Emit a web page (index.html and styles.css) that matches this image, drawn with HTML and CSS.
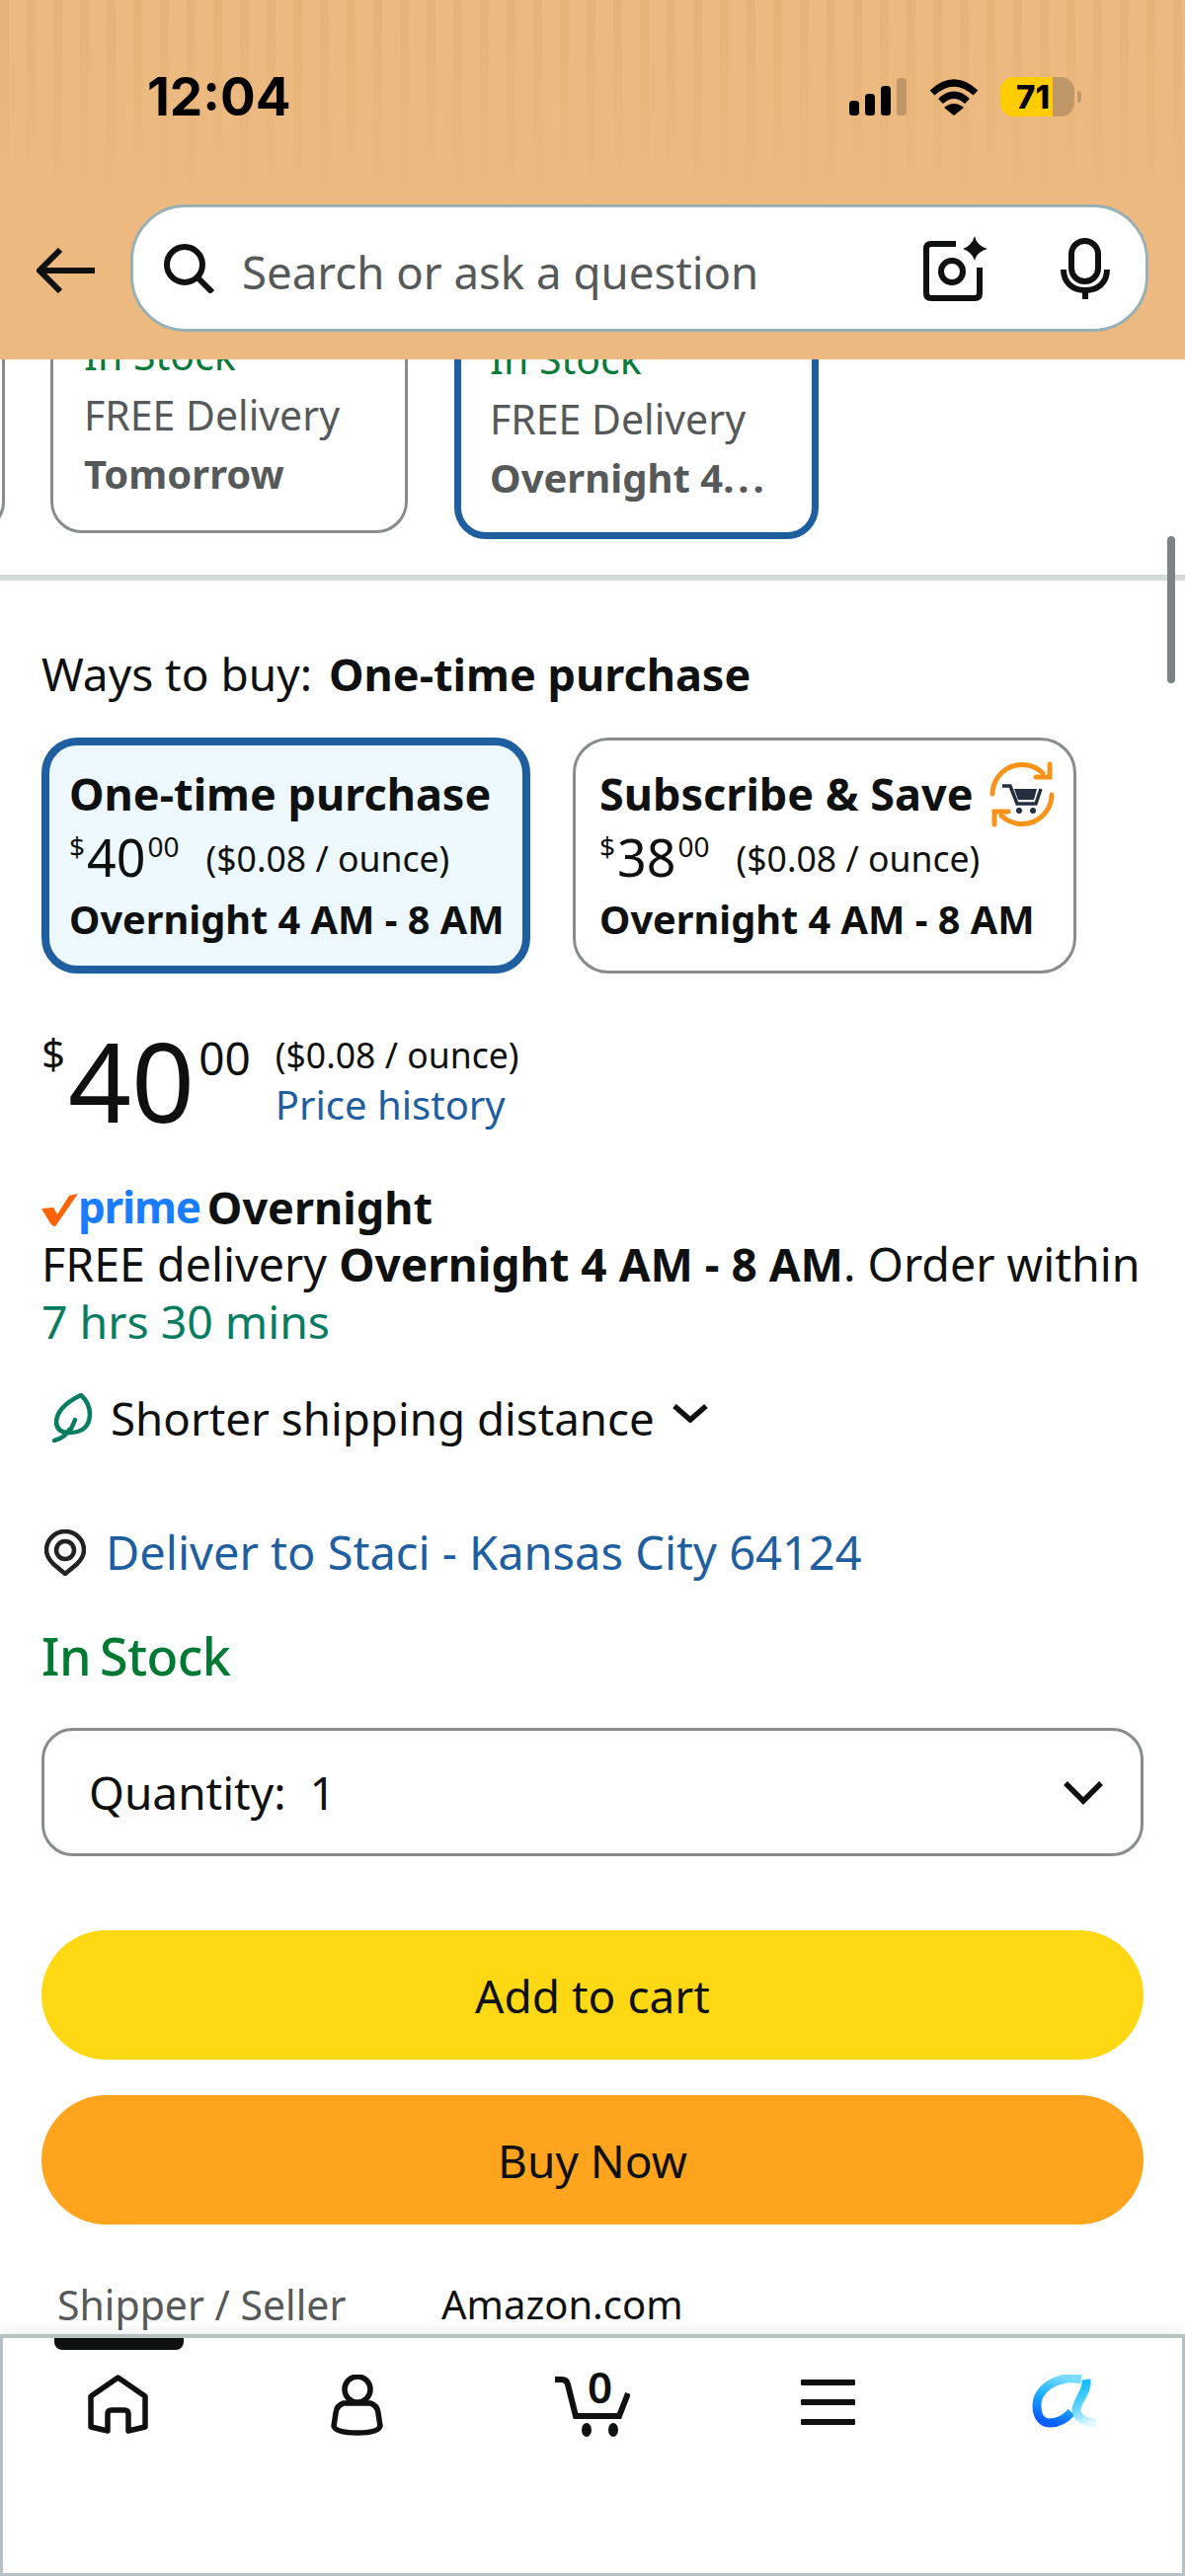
FILE: index.html
```html
<!DOCTYPE html>
<html lang="en">
<head>
    <meta charset="UTF-8">
    <meta name="viewport" content="width=device-width, initial-scale=1.0">
    <title>Product offer</title>
    <link rel="stylesheet" href="styles.css">
</head>
<body>
<div class="page">
    <header class="top-bar">
        <div class="status-bar">
            <span class="clock">12:04</span>
            <div class="status-icons">
                <svg class="signal" width="58" height="38" viewBox="0 0 58 38">
                    <rect x="0" y="23" width="10" height="15" rx="3.5" fill="#000"/>
                    <rect x="16" y="16" width="10" height="22" rx="3.5" fill="#000"/>
                    <rect x="32" y="8" width="10" height="30" rx="3.5" fill="#000"/>
                    <rect x="48" y="0" width="10" height="38" rx="3.5" fill="#c09768"/>
                </svg>
                <svg class="wifi" width="50" height="38" viewBox="0 0 50 38">
                    <path d="M3 15 Q25 -5 47 15" fill="none" stroke="#000" stroke-width="7"/>
                    <path d="M11.5 23.5 Q25 11 38.500 23.500" fill="none" stroke="#000" stroke-width="7"/>
                    <path d="M15 30 Q25 22 35 30 L25 38 Z" fill="#000"/>
                </svg>
                <div class="battery"><span>71</span></div>
            </div>
        </div>
        <div class="search-row">
            <svg class="back-arrow" width="59" height="46" viewBox="0 0 59 46">
                <path d="M59 23 H4 M24 2 L3 23 L24 44" fill="none" stroke="#0f1111" stroke-width="6"/>
            </svg>
            <div class="search-box">
                <svg class="search-icon" width="53" height="50" viewBox="0 0 53 50">
                    <circle cx="22" cy="21" r="18" fill="none" stroke="#0f1111" stroke-width="6"/>
                    <path d="M35 34 L50 49" stroke="#0f1111" stroke-width="6"/>
                </svg>
                <span class="search-text">Search or ask a question</span>
                <svg class="camera-icon" width="65" height="66" viewBox="0 0 65 66">
                    <path d="M33 8 H8 Q3 8 3 13 V58 Q3 63 8 63 H52 Q57 63 57 58 V32" fill="none" stroke="#0f1111" stroke-width="6"/>
                    <circle cx="29" cy="36" r="11" fill="none" stroke="#0f1111" stroke-width="6"/>
                    <path d="M52 0 Q54 10 65 13 Q54 16 52 25 Q49 16 40 13 Q49 10 52 0 Z" fill="#0f1111"/>
                </svg>
                <svg class="mic-icon" width="50" height="62" viewBox="0 0 50 62">
                    <rect x="11" y="3" width="27" height="41" rx="13.500" fill="none" stroke="#0f1111" stroke-width="6"/>
                    <path d="M3 32 C3 46 13 53 25 53 C37 53 47 46 47 32 M25 53 V62" fill="none" stroke="#0f1111" stroke-width="6"/>
                </svg>
            </div>
        </div>
    </header>

    <main class="content">
        <section class="offer-strip">
            <div class="strip-card strip-card-edge"></div>
            <div class="strip-card">
                <div class="strip-stock">In Stock</div>
                <div class="strip-line">FREE Delivery</div>
                <div class="strip-line strip-bold">Tomorrow</div>
            </div>
            <div class="strip-card strip-card-selected">
                <div class="strip-stock">In Stock</div>
                <div class="strip-line">FREE Delivery</div>
                <div class="strip-line strip-bold">Overnight 4<span class="strip-dots">...</span></div>
            </div>
        </section>

        <div class="scroll-thumb"></div>

        <section class="buy-panel">
            <h2 class="ways-title">Ways to buy: <b>One-time purchase</b></h2>

            <div class="ways-row">
                <div class="way-card way-card-selected">
                    <div class="way-name">One-time purchase</div>
                    <div class="way-price"><sup>$</sup><span class="way-whole">40</span><sup>00</sup><span class="way-unit">($0.08 / ounce)</span></div>
                    <div class="way-date">Overnight 4 AM - 8 AM</div>
                </div>
                <div class="way-card">
                    <div class="way-name">Subscribe &amp; Save</div>
                    <svg class="sns-icon" width="66" height="67" viewBox="0 0 66 67">
                        <path d="M3 33 A30 30 0 0 1 54 12 M63 34 A30 30 0 0 1 12 55" fill="none" stroke="#f7931a" stroke-width="5" stroke-linecap="round"/>
                        <path d="M61 3 V16 H47 M5 64 V51 H19" fill="none" stroke="#f7931a" stroke-width="5" stroke-linecap="round"/>
                        <path d="M13 25 H21 L28 43 H47 L52 28" fill="none" stroke="#232f3e" stroke-width="3.500"/>
                        <path d="M25 28 H48 L45 39 H29 Z" fill="#232f3e"/>
                        <circle cx="30" cy="50" r="3" fill="#232f3e"/>
                        <circle cx="44" cy="50" r="3" fill="#232f3e"/>
                    </svg>
                    <div class="way-price"><sup>$</sup><span class="way-whole">38</span><sup>00</sup><span class="way-unit">($0.08 / ounce)</span></div>
                    <div class="way-date">Overnight 4 AM - 8 AM</div>
                </div>
            </div>

            <div class="price-block">
                <div class="price-main"><sup class="price-sign">$</sup><span class="price-whole">40</span><sup class="price-cents">00</sup></div>
                <div class="price-side">
                    <div class="price-unit">($0.08 / ounce)</div>
                    <a class="link price-history">Price history</a>
                </div>
            </div>

            <div class="prime-row">
                <svg class="prime-check" width="37" height="34" viewBox="0 0 37 34">
                    <path d="M0 15 L12 14 L16 21 L28 2 L37 0 L14 33 Q12 34 9 30 Z" fill="#ff6200"/>
                </svg>
                <span class="prime-word">prime</span>
                <b class="prime-label">Overnight</b>
            </div>
            <p class="delivery-line">FREE delivery <b>Overnight 4 AM - 8 AM</b>. Order within</p>
            <p class="delivery-line countdown">7 hrs 30 mins</p>

            <div class="shipping-row">
                <svg class="leaf-icon" width="42" height="50" viewBox="0 0 42 50">
                    <path d="M3 48 Q14 45 18 37 M30 2 Q5 14 5 30 Q6 40 18 40 Q38 40 39 22 Q39 10 30 2 Z M18 40 Q22 32 24 27" fill="none" stroke="#067d62" stroke-width="4.500" stroke-linecap="round" stroke-linejoin="round"/>
                </svg>
                <span>Shorter shipping distance</span>
                <svg class="small-chevron" width="38" height="20" viewBox="0 0 38 20">
                    <path d="M3 3 L19 17 L35 3" fill="none" stroke="#0f1111" stroke-width="5.500"/>
                </svg>
            </div>

            <div class="deliver-row">
                <svg class="pin-icon" width="42" height="47" viewBox="0 0 42 47">
                    <path d="M21 45 L9 35 Q2 28 2 21 A19 19 0 0 1 40 21 Q40 28 33 35 Z" fill="none" stroke="#222" stroke-width="4.500"/>
                    <circle cx="21" cy="21" r="9" fill="none" stroke="#222" stroke-width="4.500"/>
                </svg>
                <a class="link">Deliver to Staci - Kansas City 64124</a>
            </div>

            <div class="stock-label">In Stock</div>

            <div class="quantity-select">
                <span>Quantity:&nbsp; 1</span>
                <svg width="42" height="25" viewBox="0 0 42 25">
                    <path d="M3 3 L21 21 L39 3" fill="none" stroke="#0f1111" stroke-width="5.500"/>
                </svg>
            </div>

            <button class="buy-button add-button">Add to cart</button>
            <button class="buy-button now-button">Buy Now</button>

            <div class="seller-row">
                <span class="seller-key">Shipper / Seller</span>
                <span class="seller-value">Amazon.com</span>
            </div>
        </section>
    </main>

    <nav class="bottom-nav">
        <div class="nav-item nav-item-active">
            <svg width="61" height="60" viewBox="0 0 61 60">
                <path d="M30.500 3 L58 22 V53 L41 57 V40 Q41 36 37 36 H24 Q20 36 20 40 V57 L3 53 V22 Z" fill="none" stroke="#0f1111" stroke-width="5.500" stroke-linejoin="round"/>
            </svg>
        </div>
        <div class="nav-item">
            <svg width="53" height="62" viewBox="0 0 53 62">
                <ellipse cx="27" cy="15" rx="13" ry="13" fill="none" stroke="#0f1111" stroke-width="5.500"/>
                <path d="M13 29 H40 Q47 31 48 39 L50 52 Q48 59 27 59 Q5 59 3 52 L5 39 Q6 31 13 29 Z" fill="none" stroke="#0f1111" stroke-width="5.500"/>
            </svg>
        </div>
        <div class="nav-item">
            <div class="cart-icon">
                <svg width="76" height="67" viewBox="0 0 76 67">
                    <path d="M0 9 H7 Q12 9 13 14 L21 46 H65 L74 23" fill="none" stroke="#0f1111" stroke-width="6"/>
                    <ellipse cx="32" cy="60" rx="5" ry="7" fill="#0f1111"/>
                    <ellipse cx="59" cy="60" rx="5" ry="7" fill="#0f1111"/>
                </svg>
                <span class="cart-count">0</span>
            </div>
        </div>
        <div class="nav-item">
            <div class="menu-icon"><i></i><i></i><i></i></div>
        </div>
        <div class="nav-item">
            <svg width="65" height="54" viewBox="0 0 65 54">
                <defs>
                    <linearGradient id="logo-ring" x1="0.700" y1="0" x2="0.300" y2="1">
                        <stop offset="0" stop-color="#7adcff"/>
                        <stop offset="0.500" stop-color="#1fb2ff"/>
                        <stop offset="1" stop-color="#0a5cff"/>
                    </linearGradient>
                    <linearGradient id="logo-tail" x1="0.500" y1="0" x2="0.700" y2="1">
                        <stop offset="0" stop-color="#08bcff"/>
                        <stop offset="0.600" stop-color="#6fd8ff"/>
                        <stop offset="1" stop-color="#e4f8ff"/>
                    </linearGradient>
                </defs>
                <path d="M50 5 C40 3 32 4 27 6 C14 10 5 20 5 31 C5 42 10 49 18 49 C26 49 34 45 40 38" fill="none" stroke="url(#logo-ring)" stroke-width="9"/>
                <path d="M55 5 C57 16 46 26 45 35 C45 44 54 49 65 49" fill="none" stroke="url(#logo-tail)" stroke-width="9"/>
            </svg>
        </div>
    </nav>
</div>
</body>
</html>
```

FILE: styles.css
```css
* {
    box-sizing: border-box;
}

body {
    margin: 0;
    font-family: "Noto Sans", sans-serif;
    color: #0f1111;
    background-color: #fff;
}

p, h2 {
    margin: 0;
    font-weight: 400;
}

.page {
    width: 1200px;
    height: 2609px;
    display: flex;
    flex-direction: column;
    overflow: hidden;
}

/* header */
.top-bar {
    height: 364px;
    flex-shrink: 0;
    padding-top: 78px;
    background-color: #ecba80;
    background-image:
        linear-gradient(to bottom, rgba(236, 186, 128, 0) 0, #ecba80 210px),
        repeating-linear-gradient(to right, #e5b277 0, #e5b277 9px, #ecba80 9px, #ecba80 27px);
}

.status-bar {
    display: flex;
    justify-content: space-between;
    align-items: center;
    height: 40px;
    padding: 0 112px 0 149px;
}

.clock {
    font-family: Inter, sans-serif;
    font-size: 53px;
    font-weight: 700;
    line-height: 40px;
    color: #000;
}

.status-icons {
    display: flex;
    align-items: center;
}

.wifi {
    margin-left: 23px;
}

.battery {
    position: relative;
    width: 75px;
    height: 40px;
    margin-left: 22px;
    border-radius: 14px;
    background: linear-gradient(to right, #ffcc00 71%, #c09769 71%);
    font-family: Inter, sans-serif;
    font-size: 33px;
    font-weight: 800;
    line-height: 40px;
    color: #000;
}

.battery span {
    display: block;
    padding-left: 16px;
}

.battery::after {
    content: "";
    position: absolute;
    right: -7px;
    top: 14px;
    width: 4px;
    height: 12px;
    border-radius: 0 6px 6px 0;
    background-color: #c09769;
}

.search-row {
    display: flex;
    align-items: center;
    margin-top: 89px;
    padding-left: 37px;
}

.back-arrow {
    margin-top: 5px;
}

.search-box {
    display: flex;
    align-items: center;
    width: 1031px;
    height: 129px;
    margin-left: 36px;
    padding: 0 36px 0 30px;
    background-color: #fff;
    border: 3px solid #97afb5;
    border-radius: 56px;
}

.search-text {
    flex: 1;
    margin-left: 27px;
    margin-top: 6px;
    font-size: 45.6px;
    line-height: 60px;
    color: #565959;
}

.mic-icon {
    margin-left: 74px;
}

/* offer strip under the header */
.content {
    position: relative;
    flex: 1;
    min-height: 0;
    overflow: hidden;
}

.offer-strip {
    display: flex;
    align-items: flex-end;
    height: 224px;
    overflow: hidden;
    border-bottom: 6px solid #d5d9d9;
    padding-bottom: 36px;
}

.strip-card {
    flex-shrink: 0;
    width: 362px;
    height: 300px;
    margin-left: 46px;
    margin-bottom: 6px;
    padding: 0 30px 27px 31px;
    border: 3px solid #888c8c;
    border-radius: 32px;
    display: flex;
    flex-direction: column;
    justify-content: flex-end;
    color: #565959;
}

.strip-card-edge {
    width: 100px;
    margin-left: -95px;
    padding: 0;
}

.strip-card-selected {
    width: 369px;
    margin-bottom: 0;
    border: 7px solid #1f5f9f;
    margin-left: 47px;
    padding: 0 29px 25px;
}

.strip-stock {
    margin-bottom: 3px;
    font-size: 41px;
    line-height: 56px;
    color: #0a7a3b;
}

.strip-line {
    font-size: 41px;
    line-height: 60px;
}

.strip-bold {
    font-size: 40px;
    font-weight: 700;
}

.strip-dots {
    letter-spacing: 4px;
}

.scroll-thumb {
    position: absolute;
    top: 179px;
    right: 10px;
    width: 8px;
    height: 149px;
    border-radius: 4px;
    background-color: #7d8285;
}

/* ways to buy */
.buy-panel {
    padding: 0 42px;
}

.ways-title {
    margin-top: 64px;
    font-size: 46px;
    line-height: 60px;
}

.ways-title b {
    margin-left: 5px;
    font-size: 45px;
}

.ways-row {
    display: flex;
    gap: 43px;
    margin-top: 34px;
}

.way-card {
    position: relative;
    width: 510px;
    height: 239px;
    padding: 24px 24px 0;
    border: 3px solid #888c8c;
    border-radius: 36px;
    background-color: #fff;
    white-space: nowrap;
}

.way-card-selected {
    width: 495px;
    padding: 19px 20px 0;
    border: 8px solid #1f5f9f;
    background-color: #edf8ff;
}

.way-name {
    font-size: 45px;
    font-weight: 700;
    line-height: 60px;
}

.sns-icon {
    position: absolute;
    right: 19px;
    top: 21px;
}

.way-price {
    display: flex;
    align-items: flex-start;
    height: 67px;
    font-size: 52px;
    line-height: 68px;
}

.way-price sup {
    font-size: 28px;
    line-height: 46px;
    vertical-align: baseline;
}

.way-whole {
    margin: 0 2px;
}

.way-unit {
    margin-left: 27px;
    font-size: 35.600px;
    line-height: 70px;
}

.way-date {
    margin-top: 2px;
    font-size: 39.700px;
    font-weight: 700;
    line-height: 56px;
}

/* main price */
.price-block {
    display: flex;
    margin-top: 56px;
}

.price-main {
    display: flex;
    align-items: flex-start;
    height: 110px;
    line-height: 104px;
}

.price-sign {
    font-size: 42px;
    line-height: 50px;
    vertical-align: baseline;
}

.price-whole {
    margin-left: 3px;
    font-size: 112px;
}

.price-cents {
    font-size: 46px;
    line-height: 58px;
    vertical-align: baseline;
    margin-left: 4px;
}

.price-side {
    margin-left: 25px;
    margin-top: 1px;
}

.price-unit {
    font-size: 35.600px;
    line-height: 50px;
}

.link {
    color: #1f5f9f;
}

.price-history {
    display: block;
    margin-top: 1px;
    font-size: 40px;
    line-height: 50px;
}

/* delivery */
.prime-row {
    display: flex;
    align-items: center;
    height: 58px;
    margin-top: 41px;
}

.prime-check {
    margin-top: 7px;
}

.prime-word {
    font-size: 44px;
    font-weight: 700;
    letter-spacing: -1.2px;
    color: #1a7dff;
}

.prime-label {
    margin-left: 7px;
    font-size: 45px;
}

.delivery-line {
    font-size: 46.600px;
    line-height: 58px;
    white-space: nowrap;
}

.delivery-line b {
    font-size: 46px;
}

.countdown {
    font-size: 46.400px;
    color: #067d62;
}

.shipping-row {
    display: flex;
    align-items: center;
    margin-top: 39px;
    padding-left: 10px;
    font-size: 45.700px;
    line-height: 60px;
}

.shipping-row span {
    margin-left: 18px;
}

.small-chevron {
    margin-left: 17px;
    margin-bottom: 10px;
}

.deliver-row {
    display: flex;
    align-items: center;
    margin-top: 76px;
    padding-left: 3px;
    font-size: 47px;
    line-height: 60px;
}

.deliver-row .link {
    margin-left: 20px;
}

.stock-label {
    margin-top: 38px;
    font-size: 52px;
    font-weight: 500;
    letter-spacing: -0.500px;
    word-spacing: -4px;
    line-height: 74px;
    color: #007a33;
}

.quantity-select {
    display: flex;
    align-items: center;
    justify-content: space-between;
    height: 130px;
    margin-top: 36px;
    padding: 0 37px 0 45px;
    border: 3px solid #888c8c;
    border-radius: 32px;
    font-size: 46px;
}

.buy-button {
    display: block;
    width: 100%;
    height: 131px;
    border: none;
    border-radius: 66px;
    font-family: inherit;
    font-size: 46px;
    color: #0f1111;
}

.add-button {
    margin-top: 75px;
    background-color: #ffd814;
}

.now-button {
    margin-top: 36px;
    background-color: #ffa41c;
}

.seller-row {
    display: flex;
    margin-top: 53px;
    padding-left: 16px;
    font-size: 40px;
    line-height: 56px;
}

.seller-key {
    width: 389px;
    color: #565959;
    font-size: 41px;
}

/* bottom nav */
.bottom-nav {
    position: relative;
    height: 245px;
    flex-shrink: 0;
    display: flex;
    border: 3px solid #b8c2c6;
    border-top-width: 4px;
    background-color: #fff;
    box-shadow: 0 -6px 12px rgba(0, 0, 0, 0.06);
}

.nav-item {
    position: relative;
    width: 239px;
    padding-top: 37px;
    display: flex;
    justify-content: center;
}

.nav-item:first-child svg {
    margin-left: -5px;
}

.nav-item-active::before {
    content: "";
    position: absolute;
    top: 0;
    left: 52px;
    width: 131px;
    height: 12px;
    border-radius: 0 0 8px 8px;
    background-color: #0f1111;
}

.cart-icon {
    position: relative;
    width: 76px;
    height: 67px;
    margin-top: -4px;
}

.cart-count {
    position: absolute;
    top: -9px;
    left: 33px;
    font-size: 44px;
    font-weight: 600;
    line-height: 50px;
}

.menu-icon {
    display: flex;
    flex-direction: column;
    justify-content: space-between;
    width: 55px;
    height: 46px;
    margin-top: 5px;
}

.menu-icon i {
    display: block;
    height: 6px;
    border-radius: 1px;
    background-color: #0f1111;
}
```
